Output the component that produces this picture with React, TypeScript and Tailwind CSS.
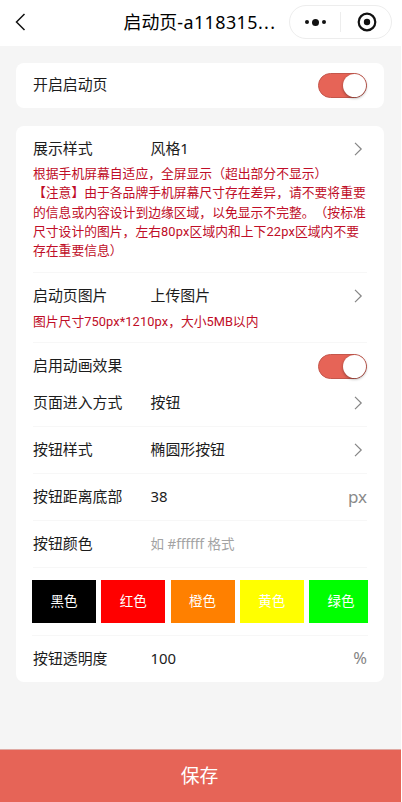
import React from "react";

type RowProps = {
  label: string;
  className: string;
  children?: React.ReactNode;
  after?: React.ReactNode;
};

const Chevron = () => (
  <svg width="9" height="14" viewBox="0 0 9 14" fill="none" className="mr-1 shrink-0">
    <path d="M1 0.8L7.2 7L1 13.2" stroke="#858585" strokeWidth="1.2" />
  </svg>
);

const Toggle = ({ label }: { label: string }) => {
  const [isOn, setOn] = React.useState(true);

  return (
    <button
      type="button"
      role="switch"
      aria-checked={isOn}
      aria-label={label}
      onClick={() => setOn(!isOn)}
      className={`flex h-[25px] w-[49px] shrink-0 items-center rounded-full border ${isOn ? "justify-end border-[#c4574c] bg-[#e66457]" : "justify-start border-gray-300 bg-gray-200"}`}
    >
      <span className="size-[23px] rounded-full bg-white shadow-[0_1px_3px_rgba(0,0,0,0.4)]" />
    </button>
  );
};

const Row = ({ label, className, children, after }: RowProps) => (
  <div className={`flex items-center ${className}`}>
    <span className="w-[117.5px] shrink-0 pb-0.5">{label}</span>
    <div className="min-w-0 flex-1 pb-0.5">{children}</div>
    {after}
  </div>
);

const Hint = ({ children }: { children: React.ReactNode }) => (
  <p className="font-['Roboto','Noto_Sans_CJK_SC',sans-serif] text-[12.8px] leading-[19.3px] whitespace-nowrap text-[#c00d27] [text-spacing-trim:space-all]">
    {children}
  </p>
);

const colors = [
  { name: "黑色", className: "w-16 bg-black" },
  { name: "红色", className: "w-16 bg-[#ff0000]" },
  { name: "橙色", className: "w-16 bg-[#ff8000]" },
  { name: "黄色", className: "w-16 bg-[#ffff00]" },
  { name: "绿色", className: "w-[59px] bg-[#00ff00] pl-[5px]" },
];

export default function App() {
  return (
    <div className="flex h-[802px] w-[401px] flex-col bg-[#f5f5f5] font-['Noto_Sans','Noto_Sans_CJK_SC',sans-serif] text-[14.9px] text-[#1c1c1c]">
      <header className="flex h-[46px] shrink-0 items-center bg-white pb-0.5">
        <button type="button" aria-label="返回" className="ml-[15px]">
          <svg width="11" height="18" viewBox="0 0 11 18" fill="none">
            <path d="M9.5 1L1.5 9L9.5 17" stroke="#111" strokeWidth="1.5" />
          </svg>
        </button>
        <h1 className="ml-[97.5px] w-[165.5px] text-[17.9px] whitespace-nowrap text-black">
          启动页<span className="tracking-[0.45px]">-a118315</span>
          <span className="tracking-[1.3px]">...</span>
        </h1>
        <div className="flex h-[34px] w-[103px] shrink-0 items-center rounded-full border border-[#ededed]">
          <div className="flex flex-1 items-center justify-center gap-[3px] pl-px">
            <i className="size-1 rounded-full bg-[#111]" />
            <i className="size-[7px] rounded-full bg-[#111]" />
            <i className="size-1 rounded-full bg-[#111]" />
          </div>
          <div className="h-5 w-px bg-[#ededed]" />
          <div className="flex flex-1 items-center justify-center pl-0.5">
            <svg width="20" height="20" viewBox="0 0 20 20">
              <circle cx="10" cy="10" r="8.3" fill="none" stroke="#111" strokeWidth="2.2" />
              <circle cx="10" cy="10" r="3.2" fill="#111" />
            </svg>
          </div>
        </div>
      </header>

      <main className="flex-1 pt-[17px] pr-[17px] pl-4">
        <section className="rounded-lg bg-white px-[17px]">
          <Row label="开启启动页" className="h-[45px]" after={<Toggle label="开启启动页" />} />
        </section>

        <section className="mt-[18px] rounded-lg bg-white px-[17px]">
          <div className="h-[147px] border-b border-[#f7f7f7]">
            <Row label="展示样式" className="h-[38px] pt-2" after={<Chevron />}>
              风格1
            </Row>
            <Hint>
              根据手机屏幕自适应，全屏显示（超出部分不显示）
              <br />
              【注意】由于各品牌手机屏幕尺寸存在差异，请不要将重要
              <br />
              的信息或内容设计到边缘区域，以免显示不完整。（按标准
              <br />
              尺寸设计的图片，左右<span className="tracking-[0.2px]">80px</span>区域内和上下
              <span className="tracking-[0.2px]">22px</span>区域内不要
              <br />
              存在重要信息）
            </Hint>
          </div>
          <div className="h-[70px] border-b border-[#f7f7f7]">
            <Row label="启动页图片" className="h-[39px] pt-[7px]" after={<Chevron />}>
              上传图片
            </Row>
            <Hint>
              图片尺寸<span className="tracking-[0.1px]">750px*1210px</span>，大小5MB以内
            </Hint>
          </div>
          <Row label="启用动画效果" className="h-[47px]" after={<Toggle label="启用动画效果" />} />
          <Row label="页面进入方式" className="h-[37px] border-b border-[#f7f7f7] pb-[10px]" after={<Chevron />}>
            按钮
          </Row>
          <Row label="按钮样式" className="h-[47px] border-b border-[#f7f7f7]" after={<Chevron />}>
            椭圆形按钮
          </Row>
          <Row
            label="按钮距离底部"
            className="h-[47px] border-b border-[#f7f7f7]"
            after={<span className="text-[17px] text-[#8a8a8a]">px</span>}
          >
            38
          </Row>
          <Row label="按钮颜色" className="h-[47px] border-b border-[#f7f7f7]">
            <span className="text-[13.5px] text-[#a3a3a3]">如 #ffffff 格式</span>
          </Row>
          <div className="-mx-px flex h-[68px] items-center justify-between border-b border-[#f7f7f7]">
            {colors.map((color) => (
              <button key={color.name} type="button" className={`h-[43px] text-[13.5px] text-white ${color.className}`}>
                {color.name}
              </button>
            ))}
          </div>
          <Row
            label="按钮透明度"
            className="h-[46px]"
            after={<span className="pb-0.5 text-[16.5px] text-[#858585]">%</span>}
          >
            100
          </Row>
        </section>
      </main>

      <button type="button" className="h-[53px] shrink-0 border-t border-[#dfaaa4] bg-[#e66457] pr-0.5 text-[18.8px] text-white">
        保存
      </button>
    </div>
  );
}
